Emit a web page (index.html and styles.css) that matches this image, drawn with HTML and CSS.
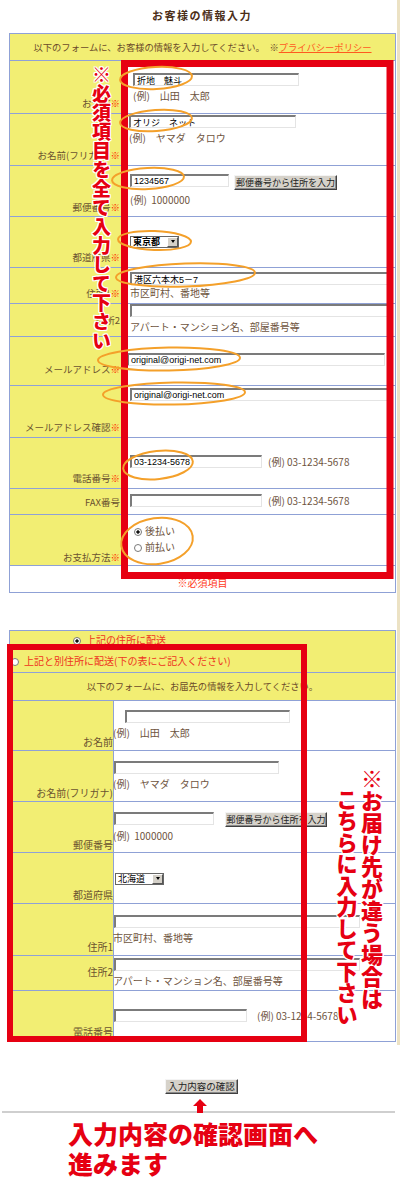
FILE: index.html
```html
<!DOCTYPE html>
<html lang="ja">
<head>
<meta charset="utf-8">
<title>お客様の情報入力</title>
<link rel="stylesheet" href="styles.css">
</head>
<body>
<div class="page">
  <h1 class="title">お客様の情報入力</h1>

  <div class="ftable t1">
    <div class="thead">以下のフォームに、お客様の情報を入力してください。　※<a class="policy" href="#">プライバシーポリシー</a></div>

    <div class="row r1">
      <div class="lbl">お名前<span class="req">※</span></div>
      <div class="val">
        <input class="inp w166" type="text" value="折地　魅斗">
        <div class="ex">(例)　山田　太郎</div>
      </div>
    </div>
    <div class="row r2">
      <div class="lbl">お名前(フリガナ)<span class="req">※</span></div>
      <div class="val">
        <input class="inp w167" type="text" value="オリジ　ネット">
        <div class="ex">(例)　ヤマダ　タロウ</div>
      </div>
    </div>
    <div class="row r3">
      <div class="lbl">郵便番号<span class="req">※</span></div>
      <div class="val">
        <div class="line">
          <input class="inp w99" type="text" value="1234567">
          <button class="btn zip" type="button">郵便番号から住所を入力</button>
        </div>
        <div class="ex">(例)&nbsp;&nbsp;1000000</div>
      </div>
    </div>
    <div class="row r4">
      <div class="lbl">都道府県<span class="req">※</span></div>
      <div class="val">
        <span class="sel bold"><span class="sel-text">東京都</span><span class="sel-btn"></span></span>
      </div>
    </div>
    <div class="row r5">
      <div class="lbl">住所1<span class="req">※</span></div>
      <div class="val">
        <input class="inp wlong" type="text" value="港区六本木5－7">
        <div class="ex tight">市区町村、番地等</div>
      </div>
    </div>
    <div class="row r6">
      <div class="lbl">住所2</div>
      <div class="val">
        <input class="inp wlong" type="text" value="">
        <div class="ex">アパート・マンション名、部屋番号等</div>
      </div>
    </div>
    <div class="row r7">
      <div class="lbl">メールアドレス<span class="req">※</span></div>
      <div class="val">
        <input class="inp w258" type="text" value="original@origi-net.com">
      </div>
    </div>
    <div class="row r8">
      <div class="lbl">メールアドレス確認<span class="req">※</span></div>
      <div class="val">
        <input class="inp wlong" type="text" value="original@origi-net.com">
      </div>
    </div>
    <div class="row r9">
      <div class="lbl">電話番号<span class="req">※</span></div>
      <div class="val">
        <div class="line">
          <input class="inp w132" type="text" value="03-1234-5678">
          <span class="ex-inline">(例) 03-1234-5678</span>
        </div>
      </div>
    </div>
    <div class="row r10">
      <div class="lbl">FAX番号</div>
      <div class="val">
        <div class="line">
          <input class="inp w132" type="text" value="">
          <span class="ex-inline">(例) 03-1234-5678</span>
        </div>
      </div>
    </div>
    <div class="row r11">
      <div class="lbl">お支払方法<span class="req">※</span></div>
      <div class="val">
        <div class="pay"><span class="radio on"></span>後払い</div>
        <div class="pay"><span class="radio"></span>前払い</div>
      </div>
    </div>
    <div class="row r12 note">※必須項目</div>
  </div>

  <div class="ftable t2">
    <div class="ship">
      <div class="ship-a"><span class="radio on"></span>上記の住所に配送</div>
      <div class="ship-b"><span class="radio"></span>上記と別住所に配送(下の表にご記入ください)</div>
    </div>
    <div class="thead th2">以下のフォームに、お届先の情報を入力してください。</div>

    <div class="row n1">
      <div class="lbl">お名前</div>
      <div class="val">
        <input class="inp w165 ml11" type="text" value="">
        <div class="ex shift">(例)　山田　太郎</div>
      </div>
    </div>
    <div class="row n2">
      <div class="lbl">お名前(フリガナ)</div>
      <div class="val">
        <input class="inp w165" type="text" value="">
        <div class="ex shift">(例)　ヤマダ　タロウ</div>
      </div>
    </div>
    <div class="row n3">
      <div class="lbl">郵便番号</div>
      <div class="val">
        <div class="line">
          <input class="inp w100" type="text" value="">
          <button class="btn zip zip2" type="button">郵便番号から住所を入力</button>
        </div>
        <div class="ex shift ex2">(例)&nbsp;&nbsp;1000000</div>
      </div>
    </div>
    <div class="row n4">
      <div class="lbl">都道府県</div>
      <div class="val">
        <span class="sel sel2"><span class="sel-text">北海道</span><span class="sel-btn"></span></span>
      </div>
    </div>
    <div class="row n5">
      <div class="lbl">住所1</div>
      <div class="val">
        <input class="inp w246" type="text" value="">
        <div class="ex shift">市区町村、番地等</div>
      </div>
    </div>
    <div class="row n6">
      <div class="lbl">住所2</div>
      <div class="val">
        <input class="inp w246" type="text" value="">
        <div class="ex shift">アパート・マンション名、部屋番号等</div>
      </div>
    </div>
    <div class="row n7">
      <div class="lbl">電話番号</div>
      <div class="val">
        <div class="line">
          <input class="inp w133" type="text" value="">
          <span class="ex-inline gap10">(例) 03-1234-5678</span>
        </div>
      </div>
    </div>
  </div>

  <button class="btn submit" type="button">入力内容の確認</button>
  <div class="divider"></div>
  <p class="goto">入力内容の確認画面へ<br>進みます</p>

  <svg class="overlay" width="400" height="1179" viewBox="0 0 400 1179">
    <g fill="none" stroke="#e60012">
      <rect x="124.5" y="63.5" width="265.5" height="512" stroke-width="7"/>
      <rect x="10" y="647" width="294" height="392" stroke-width="6"/>
    </g>
    <g fill="none" stroke="#f4a02a" stroke-width="2">
      <ellipse cx="156" cy="78" rx="36" ry="11" transform="rotate(-3 156 78)"/>
      <ellipse cx="156" cy="120.5" rx="36" ry="10.5" transform="rotate(-4 156 120.5)"/>
      <ellipse cx="148" cy="178.5" rx="36" ry="10.5" transform="rotate(-3 148 178.5)"/>
      <ellipse cx="154.5" cy="240.5" rx="36.5" ry="9.5" transform="rotate(2 154.5 240.5)"/>
      <ellipse cx="185.5" cy="275" rx="69.5" ry="11.5" transform="rotate(-2 185.5 275)"/>
      <ellipse cx="169" cy="359" rx="71" ry="11.5" transform="rotate(-1 169 359)"/>
      <ellipse cx="174" cy="393.5" rx="71" ry="11" transform="rotate(-1 174 393.5)"/>
      <ellipse cx="158" cy="465" rx="35" ry="14" transform="rotate(-6 158 465)"/>
      <ellipse cx="157" cy="541" rx="36" ry="23" transform="rotate(-8 157 541)"/>
    </g>
    <polygon fill="#e60012" points="200,1099 207,1106 203,1106 203,1113 197,1113 197,1106 193,1106"/>
  </svg>

  <div class="vnote vnote-left">※必須項目を全て入力して下さい</div>
  <div class="vnote vnote-r1">※お届け先が違う場合は</div>
  <div class="vnote vnote-r2">こちらに入力して下さい</div>
</div>
</body>
</html>
```

FILE: styles.css
```css
* { box-sizing: border-box; }
html, body { margin: 0; padding: 0; background: #fff; }
body {
  font-family: "Noto Sans CJK JP", "Liberation Sans", sans-serif;
  color: #6b4d2e;
}
.page {
  position: relative;
  width: 400px;
  height: 1179px;
  overflow: hidden;
  background: linear-gradient(to right, #ece2c4, #ece2c4) no-repeat right top / 3px 1045px, #fff;
}

.title {
  margin: 0;
  height: 33px;
  padding: 8px 0 0 4px;
  text-align: center;
  font-size: 11px;
  line-height: 14px;
  font-weight: 700;
  letter-spacing: 1.5px;
  color: #4b2e18;
}

/* tables */
.ftable {
  margin-left: 9px;
  width: 387px;
  border: 1px solid #8fa1d6;
  background: #fff;
}
.t2 { margin-top: 37px; }

.thead {
  height: 26px;
  background: #f2ee73;
  text-align: center;
  font-size: 9.3px;
  line-height: 26px;
  color: #6b4a2a;
  white-space: nowrap;
}
.th2 {
  height: 28px;
  line-height: 27px;
  border-top: 1px solid #8fa1d6;
}
.policy { color: #ff5a1f; text-decoration: underline; }

.row {
  display: grid;
  grid-template-columns: 112px 1fr;
  border-top: 1px solid #8fa1d6;
}
.t2 .row { grid-template-columns: 104px 1fr; }

.lbl {
  background: #f2ee73;
  border-right: 1px solid #8fa1d6;
  display: flex;
  align-items: flex-end;
  justify-content: flex-end;
  text-align: right;
  white-space: nowrap;
  color: #6a5230;
}
.t1 .lbl { font-size: 9.5px; line-height: 14px; padding: 0 1px 3px 0; }
.t2 .lbl { font-size: 10px; line-height: 14px; padding: 0 0 1px 0; }
.req { color: #ff2a00; }

.val { padding-left: 8px; min-width: 0; overflow: hidden; }
.t2 .val { padding-left: 0; overflow: visible; }

/* table 1 row heights & offsets */
.r1 { height: 53px; }
.r1 .val { padding-top: 12px; padding-left: 11px; }
.r2 { height: 52px; }
.r2 .val { padding-top: 1px; padding-left: 7px; }
.r3 { height: 51px; }
.r3 .val { padding-top: 8px; }
.r3 .lbl { padding-bottom: 2px; }
.r4 { height: 51px; }
.r4 .val { padding-top: 19px; }
.r5 { height: 36px; }
.r5 .val { padding-top: 4px; }
.r6 { height: 33px; }
.r6 .val { padding-top: 0; }
.r6 .lbl { padding-bottom: 9px; }
.r7 { height: 49px; }
.r7 .val { padding-top: 16px; padding-left: 5px; }
.r7 .lbl { padding-bottom: 9px; }
.r8 { height: 52px; }
.r8 .val { padding-top: 2px; }
.r9 { height: 51px; }
.r9 .val { padding-top: 17px; }
.r10 { height: 26px; }
.r10 .val { padding-top: 5px; }
.r10 .lbl { padding-bottom: 5px; }
.r11 { height: 51px; }
.r11 .val { padding-top: 8px; padding-left: 12px; }
.r11 .lbl { padding-bottom: 1px; }
.note {
  display: block;
  height: 27px;
  padding-top: 10px;
  text-align: center;
  font-size: 10px;
  line-height: 14px;
  color: #ff3b1a;
}

/* table 2 */
.ship {
  height: 41px;
  background: #f2ee73;
  font-size: 10px;
  line-height: 16px;
  color: #ee3320;
  padding-top: 1px;
  white-space: nowrap;
}
.ship-a { padding-left: 63px; }
.ship-b { padding-left: 1px; margin-top: 5px; }
.ship .radio { margin-right: 5px; }

.n1 { height: 50px; }
.n1 .val { padding-top: 9px; }
.n2 { height: 51px; }
.n2 .val { padding-top: 10px; }
.n3 { height: 51px; }
.n3 .val { padding-top: 10px; }
.n3 .lbl { padding-bottom: 0; }
.n4 { height: 51px; }
.n4 .val { padding-top: 20px; }
.n5 { height: 52px; }
.n5 .val { padding-top: 11px; }
.n6 { height: 35px; }
.n6 .val { padding-top: 2px; }
.t2 .n6 .lbl { padding-bottom: 11px; }
.n7 { height: 51px; }
.n7 .val { padding-top: 18px; }
.t2 .n7 .lbl { padding-bottom: 2px; }

/* controls */
.inp {
  display: block;
  height: 13px;
  margin: 0;
  padding: 0 0 0 2px;
  border-style: solid;
  border-width: 2px 1px 1px 2px;
  border-color: #7b7b7b #e4e4e4 #e4e4e4 #7b7b7b;
  background: #fff;
  font-family: "Liberation Sans", "Noto Sans CJK JP", sans-serif;
  font-size: 9px;
  line-height: 9px;
  color: #000;
  outline: none;
}
.w99 { width: 99px; }
.w100 { width: 100px; }
.w132 { width: 132px; }
.w133 { width: 133px; }
.w165 { width: 165px; }
.w166 { width: 166px; }
.w167 { width: 167px; }
.w246 { width: 246px; }
.w258 { width: 258px; }
.wlong { width: 262px; }
.ml11 { margin-left: 11px; }

.line { display: flex; align-items: flex-start; white-space: nowrap; }

.btn {
  font-family: "Noto Sans CJK JP", sans-serif;
  font-size: 9px;
  line-height: 11px;
  color: #222;
  background: #d6d2ca;
  border: 1px solid;
  border-color: #f4f4f4 #404040 #404040 #f4f4f4;
  box-shadow: inset -1px -1px 0 #8a8a8a;
  padding: 0;
  margin: 0;
  white-space: nowrap;
}
.zip { width: 103px; height: 15px; margin-left: 5px; margin-top: 1px; }
.zip2 { width: 102px; margin-left: 11px; margin-top: 0; }

.ex {
  margin-top: 3px;
  font-size: 10px;
  line-height: 14px;
  color: #6e5440;
  white-space: nowrap;
}
.ex.tight { margin-top: 1px; }
.ex.shift { margin-left: -1px; }
.ex.ex2 { margin-top: 2px; }
.ex-inline {
  margin-left: 6px;
  font-size: 10px;
  line-height: 13px;
  color: #6e5440;
}
.ex-inline.gap10 { margin-left: 10px; }

.sel {
  display: flex;
  align-items: center;
  justify-content: space-between;
  width: 49px;
  height: 12px;
  border: 1px solid #666;
  background: #fff;
  padding-left: 2px;
  font-size: 9px;
  line-height: 10px;
  color: #000;
}
.sel.bold { font-weight: 700; }
.sel2 { margin-left: 1px; }
.sel-btn {
  width: 11px;
  height: 10px;
  background: #d4d0c8;
  border: 1px solid;
  border-color: #fff #555 #555 #fff;
}
.sel-btn::after {
  content: "";
  display: block;
  width: 0;
  height: 0;
  margin: 2px auto 0;
  border-left: 2.5px solid transparent;
  border-right: 2.5px solid transparent;
  border-top: 3px solid #000;
}

.radio {
  display: inline-block;
  width: 8px;
  height: 8px;
  border-radius: 50%;
  border: 1px solid #7a7a7a;
  background: #fff;
  vertical-align: -1px;
  margin-right: 3px;
}
.radio.on { background: radial-gradient(circle, #111 1.4px, #fff 1.9px); }

.pay {
  font-size: 10px;
  line-height: 16px;
  color: #6e5440;
  white-space: nowrap;
}

/* bottom */
.submit {
  display: block;
  width: 73px;
  height: 15px;
  margin: 37px 0 0 165px;
  font-size: 9.5px;
}
.divider {
  margin: 17px 0 0 2px;
  width: 393px;
  height: 2px;
  background: #cfcfcf;
}
.goto {
  margin: 5px 0 0 0;
  padding-left: 68px;
  font-size: 25px;
  line-height: 30px;
  font-weight: 900;
  color: #e60012;
  letter-spacing: 0;
}

/* annotations */
.overlay {
  position: absolute;
  left: 0;
  top: 0;
  pointer-events: none;
}
.vnote {
  position: absolute;
  writing-mode: vertical-rl;
  font-weight: 900;
  color: #e60012;
  line-height: 1;
  white-space: nowrap;
  text-shadow: 1px 0 0 #fff, -1px 0 0 #fff, 0 1px 0 #fff, 0 -1px 0 #fff,
               1px 1px 0 #fff, -1px -1px 0 #fff, 1px -1px 0 #fff, -1px 1px 0 #fff;
}
.vnote-left { left: 92px; top: 65px; font-size: 19px; }
.vnote-r1 { left: 361px; top: 768px; font-size: 22px; }
.vnote-r2 { left: 336px; top: 789px; font-size: 21.5px; }
```
